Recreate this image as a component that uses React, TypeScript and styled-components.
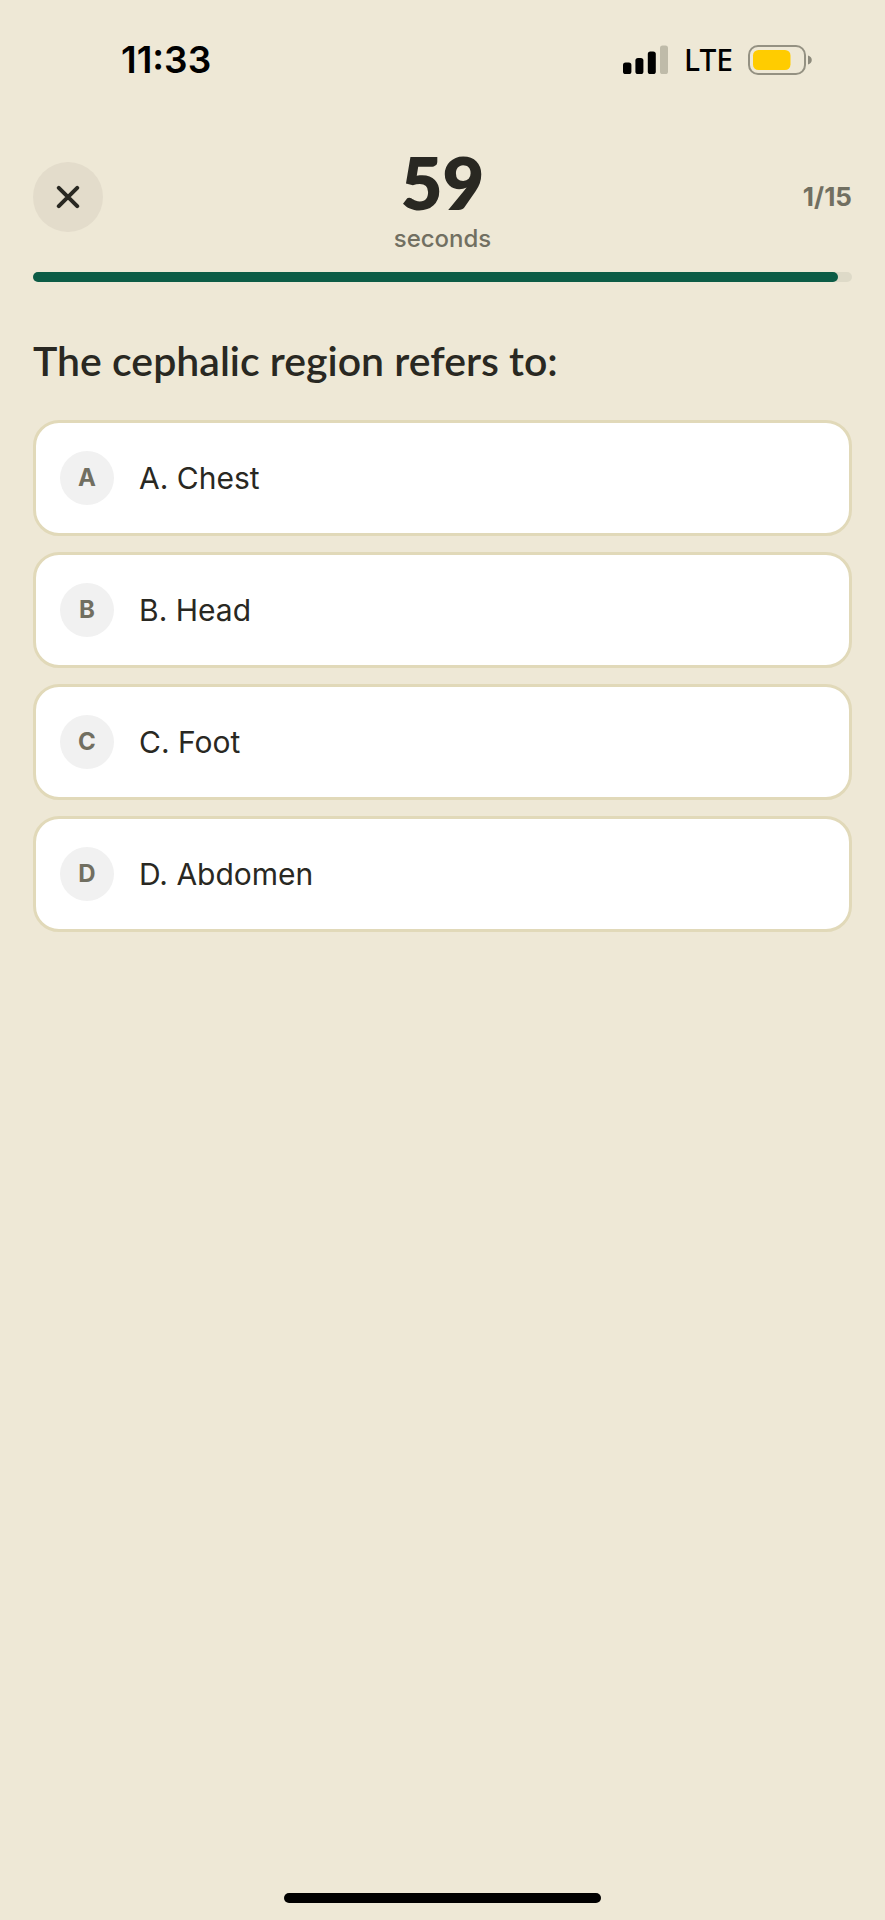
import React, { useState } from "react";
import styled, { createGlobalStyle } from "styled-components";

const GlobalStyle = createGlobalStyle`
  *, *::before, *::after { box-sizing: border-box; }
  body {
    margin: 0;
    background: #eee8d6;
    color: #292822;
    font-family: Inter, "Liberation Sans", sans-serif;
  }
`;

const Screen = styled.div`
  display: flex;
  flex-direction: column;
  min-height: 100vh;
`;

const StatusBar = styled.div`
  display: flex;
  align-items: center;
  justify-content: space-between;
  height: 120px;
  padding: 0 73px 0 121px;
  color: #000;
`;

const Clock = styled.time`
  font-size: 37px;
  line-height: 40px;
  font-weight: 600;
`;

const StatusIcons = styled.div`
  display: flex;
  align-items: center;
  gap: 15px;
`;

const Network = styled.span`
  font-family: "Noto Sans", sans-serif;
  font-size: 30px;
  line-height: 40px;
  font-weight: 500;
`;

const Main = styled.main`
  flex: 1;
  display: flex;
  flex-direction: column;
  padding: 20px 33px;
`;

const Header = styled.header`
  display: grid;
  grid-template-columns: 1fr auto 1fr;
  align-items: center;
  min-height: 114px;
`;

const CloseButton = styled.button`
  display: grid;
  place-items: center;
  width: 70px;
  height: 70px;
  padding: 0;
  border: 0;
  border-radius: 50%;
  background: #e3dccb;
  color: #292822;
`;

const Timer = styled.div`
  display: flex;
  flex-direction: column;
  align-items: center;
`;

const TimerValue = styled.strong`
  font-family: Lato, sans-serif;
  font-size: 72px;
  line-height: 84px;
  font-weight: 800;
`;

const TimerUnit = styled.span`
  font-size: 24px;
  line-height: 30px;
  font-weight: 500;
  color: #716f61;
`;

const Counter = styled.span`
  justify-self: end;
  font-size: 26px;
  line-height: 30px;
  font-weight: 700;
  color: #716f61;
`;

const Progress = styled.div`
  height: 10px;
  margin-top: 18px;
  border-radius: 5px;
  background: #dedac8;
`;

const ProgressFill = styled.div`
  height: 100%;
  border-radius: 5px;
  background: #0c5c46;
`;

const Question = styled.h1`
  margin: 52px 0 32px;
  font-family: Lato, sans-serif;
  font-size: 41px;
  line-height: 54px;
  font-weight: 600;
`;

const Options = styled.div`
  display: flex;
  flex-direction: column;
  gap: 16px;
`;

const Option = styled.button`
  display: flex;
  align-items: center;
  gap: 25px;
  min-height: 116px;
  padding: 16px 24px;
  border: 3px solid #e1d9b9;
  border-radius: 26px;
  background: #fff;
  color: #292822;
  font: inherit;
  font-size: 30px;
  line-height: 44px;
  text-align: left;
`;

const Letter = styled.span`
  display: grid;
  place-items: center;
  flex: none;
  width: 54px;
  height: 54px;
  border-radius: 50%;
  background: #f1f1f1;
  color: #716f61;
  font-size: 24px;
  line-height: 30px;
  font-weight: 700;
`;

const HomeIndicator = styled.div`
  align-self: center;
  width: 317px;
  height: 10px;
  margin-bottom: 17px;
  border-radius: 5px;
  background: #000;
`;

const SignalIcon = () => (
  <svg width="46" height="30" viewBox="0 0 46 30" aria-hidden="true">
    <rect x="0" y="17.5" width="8.4" height="11.5" rx="2.6" />
    <rect x="12.4" y="13" width="8" height="16" rx="2.6" />
    <rect x="24.8" y="6.5" width="8" height="22.5" rx="2.6" />
    <rect x="37" y="0.5" width="8" height="28.5" rx="2.6" fill="#bfbba9" />
  </svg>
);

const BatteryIcon = () => (
  <svg width="64" height="30" viewBox="0 0 64 30" aria-hidden="true">
    <rect x="1" y="1" width="56" height="28" rx="9" fill="none" stroke="#949182" strokeWidth="2" />
    <rect x="5" y="5" width="37.5" height="20" rx="5.5" fill="#fc0" />
    <path d="M60 10.5c5 1 5 8 0 9z" fill="#8d8a7c" />
  </svg>
);

const CloseIcon = () => (
  <svg width="24" height="24" viewBox="0 0 24 24" fill="none" stroke="currentColor" strokeWidth="4" strokeLinecap="round" aria-hidden="true">
    <path d="M2.8 2.8l18.4 18.4M21.2 2.8L2.8 21.2" />
  </svg>
);

const answers = [
  { letter: "A", text: "Chest" },
  { letter: "B", text: "Head" },
  { letter: "C", text: "Foot" },
  { letter: "D", text: "Abdomen" },
];

export default function App() {
  const [secondsLeft] = useState(59);

  return (
    <>
      <GlobalStyle />
      <Screen>
        <StatusBar>
          <Clock>11:33</Clock>
          <StatusIcons>
            <SignalIcon />
            <Network>LTE</Network>
            <BatteryIcon />
          </StatusIcons>
        </StatusBar>
        <Main>
          <Header>
            <CloseButton type="button" aria-label="Close quiz">
              <CloseIcon />
            </CloseButton>
            <Timer>
              <TimerValue>{secondsLeft}</TimerValue>
              <TimerUnit>seconds</TimerUnit>
            </Timer>
            <Counter>1/15</Counter>
          </Header>
          <Progress role="progressbar" aria-label="Time left" aria-valuenow={secondsLeft} aria-valuemax={60}>
            <ProgressFill style={{ width: `${(secondsLeft / 60) * 100}%` }} />
          </Progress>
          <Question>The cephalic region refers to:</Question>
          <Options>
            {answers.map(({ letter, text }) => (
              <Option key={letter} type="button">
                <Letter>{letter}</Letter>
                <span>{`${letter}. ${text}`}</span>
              </Option>
            ))}
          </Options>
        </Main>
        <HomeIndicator />
      </Screen>
    </>
  );
}
